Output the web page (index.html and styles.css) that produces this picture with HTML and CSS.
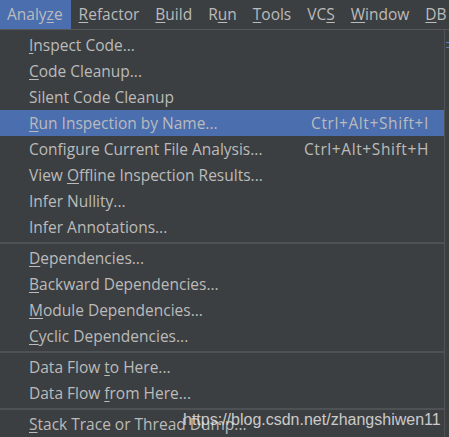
FILE: index.html
```html
<!DOCTYPE html>
<html>
<head>
<meta charset="utf-8">
<link rel="stylesheet" href="styles.css">
</head>
<body>
<div class="screen">
  <div class="menubar">
    <div class="mb-item active">Analy<u>z</u>e</div>
    <div class="mb-item"><u>R</u>efactor</div>
    <div class="mb-item"><u>B</u>uild</div>
    <div class="mb-item">R<u>u</u>n</div>
    <div class="mb-item"><u>T</u>ools</div>
    <div class="mb-item">VC<u>S</u></div>
    <div class="mb-item"><u>W</u>indow</div>
    <div class="mb-item"><u>D</u>B</div>
  </div>
  <div class="body">
    <div class="popup">
      <div class="row"><span><u>I</u>nspect Code...</span></div>
      <div class="row"><span><u>C</u>ode Cleanup...</span></div>
      <div class="row"><span>Silent Code Cleanup</span></div>
      <div class="row selected"><span><u>R</u>un Inspection by Name...</span><span class="key">Ctrl+Alt+Shift+I</span></div>
      <div class="row"><span>Configure Current File Analysis...</span><span class="key">Ctrl+Alt+Shift+H</span></div>
      <div class="row"><span>View <u>O</u>ffline Inspection Results...</span></div>
      <div class="row"><span>Infer Nullity...</span></div>
      <div class="row"><span>Infer Annotations...</span></div>
      <div class="sep"></div>
      <div class="row"><span><u>D</u>ependencies...</span></div>
      <div class="row"><span><u>B</u>ackward Dependencies...</span></div>
      <div class="row"><span><u>M</u>odule Dependencies...</span></div>
      <div class="row"><span><u>C</u>yclic Dependencies...</span></div>
      <div class="sep"></div>
      <div class="row"><span>Data Flow <u>t</u>o Here...</span></div>
      <div class="row"><span>Data Flow <u>f</u>rom Here...</span></div>
      <div class="sep"></div>
      <div class="row"><span><u>S</u>tack Trace or Thread Dump...</span></div>
    </div>
    <div class="gutter">
      <div class="mark"></div>
      <div class="mark"></div>
    </div>
  </div>
  <div class="watermark">https://blog.csdn.net/zhangshiwen11</div>
</div>
</body>
</html>
```

FILE: styles.css
```css
html, body {
  margin: 0;
  padding: 0;
  background: #3c3f41;
}
.screen {
  position: relative;
  width: 449px;
  height: 437px;
  overflow: hidden;
  background: #3c3f41;
  color: #bbbbbb;
  font-family: "Open Sans", "Noto Sans", sans-serif;
  font-size: 15.5px;
}
u {
  text-decoration: underline;
  text-underline-offset: 2px;
  text-decoration-thickness: 1px;
}
.menubar {
  display: flex;
  height: 29px;
  border-bottom: 1px solid #555759;
  box-sizing: content-box;
}
.mb-item {
  padding: 0 8px;
  line-height: 29px;
  white-space: nowrap;
}
.mb-item:first-child {
  padding-left: 7px;
}
.mb-item.active {
  background: #4b6eaf;
}
.body {
  display: flex;
}
.popup {
  width: 445px;
  flex: none;
  padding-top: 2px;
  border-right: 1px solid #505254;
  box-sizing: border-box;
}
.row {
  display: flex;
  justify-content: space-between;
  align-items: center;
  height: 26px;
  padding: 0 15px 0 29px;
  white-space: nowrap;
}
.key {
  letter-spacing: 0.6px;
}
.row.selected {
  background: #4b6eaf;
}
.sep {
  height: 5px;
  display: flex;
  align-items: center;
}
.sep::before {
  content: "";
  display: block;
  width: 100%;
  height: 2px;
  background: #4f5254;
}
.gutter {
  flex: 1;
  padding-top: 12px;
  display: flex;
  flex-direction: column;
  gap: 4px;
  align-items: flex-end;
}
.mark {
  width: 3px;
  height: 1px;
  background: #5a7fb0;
}
.watermark {
  position: absolute;
  left: 183px;
  top: 411px;
  font-family: "Liberation Sans", Arial, sans-serif;
  font-size: 16px;
  color: rgba(230, 230, 230, 0.85);
  white-space: nowrap;
}
```
